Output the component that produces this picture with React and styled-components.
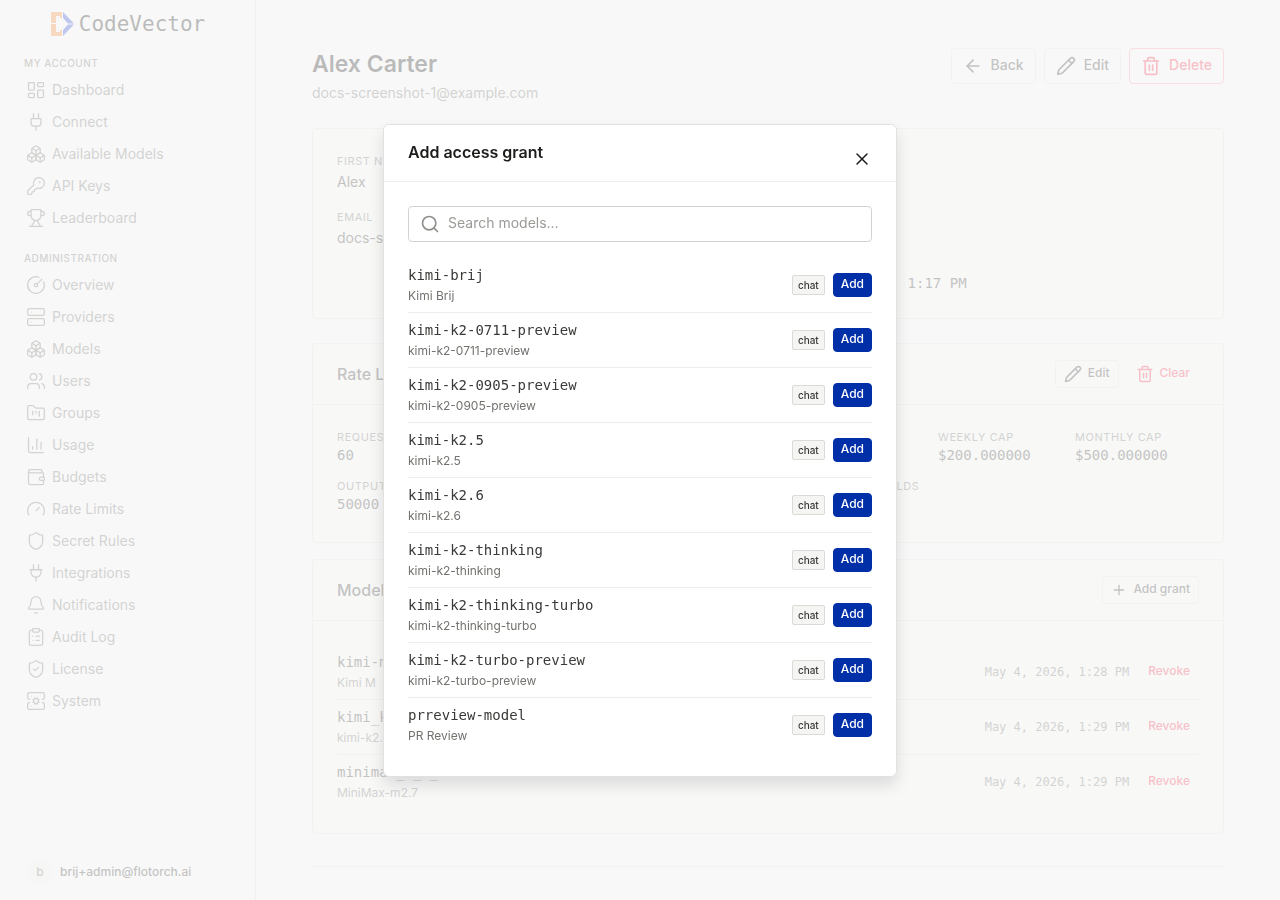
import { useState } from "react";
import styled, { createGlobalStyle, css } from "styled-components";
import {
  ArrowLeft,
  Bell,
  Boxes,
  ChartColumn,
  CircleGauge,
  ClipboardList,
  FolderKanban,
  Gauge,
  KeyRound,
  LayoutDashboard,
  Pencil,
  Plug,
  Plug2,
  Plus,
  Search,
  Server,
  ServerCog,
  Shield,
  ShieldCheck,
  Trash2,
  Trophy,
  Users,
  Wallet,
  X,
} from "lucide-react";

const GlobalStyle = createGlobalStyle`
  :root {
    --color-page: #f8f8f8;
    --color-line: #e2e1de;
    --color-text: #3a3a38;
    --color-muted: #73726e;
    --color-primary: #002fa7;
    --color-danger: #f2304a;
    --font-sans: Inter, "Liberation Sans", sans-serif;
    --font-mono: "DejaVu Sans Mono", "Liberation Mono", monospace;
  }

  * {
    box-sizing: border-box;
  }

  body {
    margin: 0;
    background: var(--color-page);
    color: var(--color-text);
    font-family: var(--font-sans);
    font-size: 14px;
    line-height: 22px;
  }

  h1, h2, h3, p, ul, dl, dd {
    margin: 0;
    padding: 0;
  }

  ul {
    list-style: none;
  }

  button, input {
    font-family: inherit;
  }

  svg {
    flex-shrink: 0;
  }
`;

const Layout = styled.div`
  display: flex;
  height: 100vh;
  overflow: hidden;
`;

const SideBar = styled.aside`
  display: flex;
  flex-direction: column;
  width: 256px;
  flex-shrink: 0;
  border-right: 1px solid var(--color-line);
`;

const Brand = styled.a`
  display: flex;
  align-items: center;
  justify-content: center;
  gap: 5px;
  height: 48px;
  margin-bottom: 4px;
  color: #1c1c1a;
  font-family: var(--font-mono);
  font-size: 21px;
  text-decoration: none;
`;

const NavGroup = styled.section`
  margin-bottom: 13px;
`;

const NavTitle = styled.h3`
  padding: 0 24px;
  color: var(--color-muted);
  font-size: 10px;
  font-weight: 500;
  letter-spacing: 0.05em;
  text-transform: uppercase;
`;

const NavItem = styled.a`
  display: flex;
  align-items: center;
  gap: 6px;
  height: 32px;
  padding: 0 26px;
  color: var(--color-muted);
  text-decoration: none;
`;

const Account = styled.div`
  display: flex;
  align-items: center;
  gap: 8px;
  margin-top: auto;
  padding: 16px 28px;
  font-size: 12px;
  font-weight: 500;
`;

const Avatar = styled.span`
  display: grid;
  place-items: center;
  width: 24px;
  height: 24px;
  border-radius: 50%;
  background: #f0f0ee;
  color: var(--color-muted);
`;

const Main = styled.main`
  flex: 1;
  min-width: 0;
  padding: 48px 56px;
  overflow: hidden;
`;

const PageHead = styled.header`
  display: flex;
  align-items: flex-start;
  justify-content: space-between;
  margin-bottom: 24px;

  h1 {
    color: #1c1c1a;
    font-size: 23px;
    font-weight: 600;
    line-height: 32px;
  }

  p {
    margin-top: 2px;
    color: var(--color-muted);
  }
`;

const Actions = styled.div`
  display: flex;
  align-items: center;
  gap: 8px;
`;

const Button = styled.button`
  display: inline-flex;
  align-items: center;
  justify-content: center;
  gap: 8px;
  height: 36px;
  padding: 0 11px;
  border: 1px solid var(--color-line);
  border-radius: 4px;
  background: transparent;
  color: var(--color-text);
  font-size: 14px;
  font-weight: 500;
  line-height: 20px;
  cursor: pointer;

  span {
    padding-bottom: 2px;
  }

  ${({ $small }) =>
    $small &&
    css`
      gap: 6px;
      height: 28px;
      padding: 0 8px;
      font-size: 12px;
    `}

  ${({ $danger }) =>
    $danger &&
    css`
      border-color: #f89aa6;
      color: var(--color-danger);
    `}

  ${({ $ghost }) =>
    $ghost &&
    css`
      border-color: transparent;
    `}

  ${({ $primary }) =>
    $primary &&
    css`
      height: 24px;
      padding: 0 7px;
      border-color: var(--color-primary);
      background: var(--color-primary);
      color: #fff;
    `}
`;

const Card = styled.section`
  margin-bottom: ${({ $gap }) => $gap || 16}px;
  border: 1px solid var(--color-line);
  border-radius: 4px;
  background: #f6f6f5;
`;

const CardHead = styled.header`
  display: flex;
  align-items: center;
  justify-content: space-between;
  height: 61px;
  padding: 0 24px;
  border-bottom: 1px solid var(--color-line);

  h2 {
    font-size: 16px;
    font-weight: 500;
  }
`;

const CardBody = styled.div`
  padding: 24px;
`;

const Details = styled.dl`
  display: grid;
  grid-template-columns: 1fr 1fr;
  gap: 16px 60px;
`;

const Limits = styled.dl`
  display: grid;
  grid-template-columns: repeat(4, 1fr) 137px 124px;
  row-gap: 12px;
  padding-bottom: 3px;
`;

const Field = styled.div`
  min-width: 0;
  padding-top: ${({ $bare }) => ($bare ? 8 : 0)}px;
  white-space: nowrap;

  dt {
    color: var(--color-muted);
    font-size: 11px;
    line-height: 16px;
    letter-spacing: 0.05em;
    text-transform: uppercase;
  }

  dd {
    padding-top: ${({ $mono }) => ($mono ? 0 : 2)}px;
    font-family: ${({ $mono }) => ($mono ? "var(--font-mono)" : "inherit")};
    line-height: ${({ $mono }) => ($mono ? 21 : 22)}px;
  }
`;

const Row = styled.li`
  display: flex;
  align-items: center;
  gap: ${({ $gap }) => $gap || 8}px;
  padding: 6px 0;

  & + & {
    border-top: 1px solid var(--color-line);
  }
`;

const RowText = styled.div`
  flex: 1;
  min-width: 0;

  p:first-child {
    font-family: var(--font-mono);
  }

  p:last-child {
    color: var(--color-muted);
    font-size: 12px;
    line-height: 20px;
  }
`;

const Time = styled.time`
  color: var(--color-muted);
  font-family: var(--font-mono);
  font-size: 12px;
`;

const Divider = styled.hr`
  margin: 32px 0;
  border: 0;
  border-top: 1px solid var(--color-line);
`;

const Overlay = styled.div`
  position: fixed;
  inset: 0;
  display: flex;
  align-items: center;
  justify-content: center;
  background: rgba(248, 248, 248, 0.72);
`;

const Modal = styled.div`
  width: 514px;
  max-width: 100%;
  border: 1px solid var(--color-line);
  border-radius: 6px;
  background: #fff;
  box-shadow: 0 8px 16px rgba(0, 0, 0, 0.12);
`;

const ModalHead = styled.header`
  display: flex;
  justify-content: space-between;
  height: 57px;
  padding: 16px 24px 12px;
  border-bottom: 1px solid #ececea;

  h2 {
    color: #1c1c1a;
    font-size: 16px;
    font-weight: 600;
  }
`;

const CloseButton = styled.button`
  display: flex;
  align-self: flex-end;
  padding: 0;
  border: 0;
  background: none;
  color: #1c1c1a;
  cursor: pointer;
`;

const ModalBody = styled.div`
  padding: 24px;

  ${Row} + ${Row} {
    border-color: #ececea;
  }
`;

const SearchBox = styled.label`
  display: flex;
  align-items: center;
  gap: 8px;
  height: 36px;
  margin-bottom: 16px;
  padding: 0 11px;
  border: 1px solid #d3d2cf;
  border-radius: 4px;
  color: #91908c;

  input {
    flex: 1;
    min-width: 0;
    padding: 0 0 2px;
    border: 0;
    outline: 0;
    background: none;
    color: var(--color-text);
    font-size: 14px;
  }

  input::placeholder {
    color: #9b9a96;
    opacity: 1;
  }
`;

const Tag = styled.span`
  padding: 0 5px;
  border: 1px solid #dbdad7;
  border-radius: 2px;
  background: #f5f5f4;
  font-size: 10px;
  font-weight: 500;
  line-height: 18px;
`;

const account = [
  ["Dashboard", LayoutDashboard],
  ["Connect", Plug],
  ["Available Models", Boxes],
  ["API Keys", KeyRound],
  ["Leaderboard", Trophy],
];

const administration = [
  ["Overview", CircleGauge],
  ["Providers", Server],
  ["Models", Boxes],
  ["Users", Users],
  ["Groups", FolderKanban],
  ["Usage", ChartColumn],
  ["Budgets", Wallet],
  ["Rate Limits", Gauge],
  ["Secret Rules", Shield],
  ["Integrations", Plug2],
  ["Notifications", Bell],
  ["Audit Log", ClipboardList],
  ["License", ShieldCheck],
  ["System", ServerCog],
];

const limits = [
  ["Requests / min", "60"],
  ["Input tokens", "100000"],
  ["Concurrency", "10"],
  ["Daily cap", "$50"],
  ["Weekly cap", "$200.000000"],
  ["Monthly cap", "$500.000000"],
  ["Output tokens", "50000"],
  ["Timeout", "60"],
  ["Retries", "3"],
  ["Budget thresholds", "80%"],
];

const grants = [
  ["kimi-main", "Kimi M", "May 4, 2026, 1:28 PM"],
  ["kimi_k2_6", "kimi-k2.6", "May 4, 2026, 1:29 PM"],
  ["minimax_m_2_", "MiniMax-m2.7", "May 4, 2026, 1:29 PM"],
];

const models = [
  ["kimi-brij", "Kimi Brij"],
  ["kimi-k2-0711-preview", "kimi-k2-0711-preview"],
  ["kimi-k2-0905-preview", "kimi-k2-0905-preview"],
  ["kimi-k2.5", "kimi-k2.5"],
  ["kimi-k2.6", "kimi-k2.6"],
  ["kimi-k2-thinking", "kimi-k2-thinking"],
  ["kimi-k2-thinking-turbo", "kimi-k2-thinking-turbo"],
  ["kimi-k2-turbo-preview", "kimi-k2-turbo-preview"],
  ["prreview-model", "PR Review"],
];

function Logo() {
  return (
    <svg width="24" height="24" viewBox="0 0 24 24">
      <path fill="#ef8a2f" d="M1 0h11v6h-2V4H6v7H1zM1 12h5v8h4v-2h2v6H1z" />
      <path fill="#3049d8" d="M13 0l11 11.5h-6L13 6zM13 24l11-11.5h-6L13 18z" />
    </svg>
  );
}

function NavSection({ title, items }) {
  return (
    <NavGroup>
      <NavTitle>{title}</NavTitle>
      <ul>
        {items.map(([name, Icon]) => (
          <li key={name}>
            <NavItem href="#">
              <Icon size={20} strokeWidth={1.5} />
              <span>{name}</span>
            </NavItem>
          </li>
        ))}
      </ul>
    </NavGroup>
  );
}

function GrantDialog({ onClose }) {
  const [query, setQuery] = useState("");
  const found = models.filter(([id]) => id.includes(query.toLowerCase()));

  return (
    <Overlay>
      <Modal role="dialog" aria-modal="true" aria-labelledby="grant-title">
        <ModalHead>
          <h2 id="grant-title">Add access grant</h2>
          <CloseButton type="button" aria-label="Close" onClick={onClose}>
            <X size={20} strokeWidth={1.75} />
          </CloseButton>
        </ModalHead>
        <ModalBody>
          <SearchBox>
            <Search size={20} />
            <input
              type="text"
              aria-label="Search models"
              placeholder="Search models…"
              value={query}
              onChange={(e) => setQuery(e.target.value)}
            />
          </SearchBox>
          <ul>
            {found.map(([id, name]) => (
              <Row key={id}>
                <RowText>
                  <p>{id}</p>
                  <p>{name}</p>
                </RowText>
                <Tag>chat</Tag>
                <Button type="button" $small $primary>
                  <span>Add</span>
                </Button>
              </Row>
            ))}
          </ul>
        </ModalBody>
      </Modal>
    </Overlay>
  );
}

export default function App() {
  const [open, setOpen] = useState(true);

  return (
    <>
      <GlobalStyle />
      <Layout>
        <SideBar>
          <Brand href="#">
            <Logo />
            CodeVector
          </Brand>
          <nav>
            <NavSection title="My account" items={account} />
            <NavSection title="Administration" items={administration} />
          </nav>
          <Account>
            <Avatar>b</Avatar>
            <span>brij+admin@flotorch.ai</span>
          </Account>
        </SideBar>

        <Main>
          <PageHead>
            <div>
              <h1>Alex Carter</h1>
              <p>docs-screenshot-1@example.com</p>
            </div>
            <Actions>
              <Button type="button">
                <ArrowLeft size={20} />
                <span>Back</span>
              </Button>
              <Button type="button">
                <Pencil size={20} />
                <span>Edit</span>
              </Button>
              <Button type="button" $danger>
                <Trash2 size={20} />
                <span>Delete</span>
              </Button>
            </Actions>
          </PageHead>

          <Card $gap={24}>
            <CardBody>
              <Details>
                <Field>
                  <dt>First name</dt>
                  <dd>Alex</dd>
                </Field>
                <Field>
                  <dt>Last name</dt>
                  <dd>Carter</dd>
                </Field>
                <Field>
                  <dt>Email</dt>
                  <dd>docs-screenshot-1@example.com</dd>
                </Field>
                <Field>
                  <dt>Role</dt>
                  <dd>User</dd>
                </Field>
                <div />
                <Field $mono $bare>
                  <dd>May 4, 2026, 1:17 PM</dd>
                </Field>
              </Details>
            </CardBody>
          </Card>

          <Card>
            <CardHead>
              <h2>Rate Limits</h2>
              <Actions>
                <Button type="button" $small>
                  <Pencil size={18} />
                  <span>Edit</span>
                </Button>
                <Button type="button" $small $danger $ghost>
                  <Trash2 size={18} />
                  <span>Clear</span>
                </Button>
              </Actions>
            </CardHead>
            <CardBody>
              <Limits>
                {limits.map(([label, value]) => (
                  <Field key={label} $mono>
                    <dt>{label}</dt>
                    <dd>{value}</dd>
                  </Field>
                ))}
              </Limits>
            </CardBody>
          </Card>

          <Card $gap={32}>
            <CardHead>
              <h2>Model Access</h2>
              <Button type="button" $small onClick={() => setOpen(true)}>
                <Plus size={16} />
                <span>Add grant</span>
              </Button>
            </CardHead>
            <CardBody>
              <ul>
                {grants.map(([id, name, time]) => (
                  <Row key={id} $gap={10}>
                    <RowText>
                      <p>{id}</p>
                      <p>{name}</p>
                    </RowText>
                    <Time>{time}</Time>
                    <Button type="button" $small $danger $ghost>
                      <span>Revoke</span>
                    </Button>
                  </Row>
                ))}
              </ul>
            </CardBody>
          </Card>

          <Divider />
        </Main>
      </Layout>
      {open && <GrantDialog onClose={() => setOpen(false)} />}
    </>
  );
}
